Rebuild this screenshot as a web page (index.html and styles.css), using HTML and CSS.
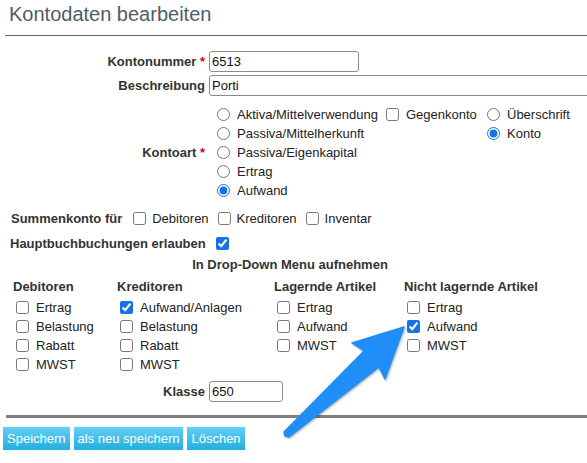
FILE: index.html
```html
<!DOCTYPE html>
<html lang="de">
<head>
    <meta charset="UTF-8">
    <meta name="viewport" content="width=device-width, initial-scale=1.0">
    <title>Kontodaten bearbeiten</title>
    <link rel="stylesheet" href="styles.css">
</head>
<body>
    <h1 class="page-title">Kontodaten bearbeiten</h1>

    <form class="account-form">
        <div class="field-grid">
            <label class="field-label" for="accno">Kontonummer <span class="req">*</span></label>
            <div><input type="text" id="accno" class="text-input input-short" value="6513"></div>

            <label class="field-label" for="description">Beschreibung</label>
            <div><input type="text" id="description" class="text-input input-wide" value="Porti"></div>

            <div class="field-label type-label">Kontoart <span class="req">*</span></div>
            <div class="type-group">
                <div class="type-col col-main">
                    <label class="opt"><input type="radio" name="category"> Aktiva/Mittelverwendung</label>
                    <label class="opt"><input type="radio" name="category"> Passiva/Mittelherkunft</label>
                    <label class="opt"><input type="radio" name="category"> Passiva/Eigenkapital</label>
                    <label class="opt"><input type="radio" name="category"> Ertrag</label>
                    <label class="opt"><input type="radio" name="category" checked> Aufwand</label>
                </div>
                <div class="type-col col-contra">
                    <label class="opt"><input type="checkbox"> Gegenkonto</label>
                </div>
                <div class="type-col">
                    <label class="opt"><input type="radio" name="charttype"> Überschrift</label>
                    <label class="opt"><input type="radio" name="charttype" checked> Konto</label>
                </div>
            </div>
        </div>

        <div class="check-row summary-row">
            <span class="row-label">Summenkonto für</span>
            <label class="opt inline"><input type="checkbox"> Debitoren</label>
            <label class="opt inline"><input type="checkbox"> Kreditoren</label>
            <label class="opt inline"><input type="checkbox"> Inventar</label>
        </div>

        <div class="check-row ledger-row">
            <span class="row-label">Hauptbuchbuchungen erlauben</span>
            <label class="opt inline"><input type="checkbox" checked></label>
        </div>

        <div class="dropdown">
            <div class="dropdown-title">In Drop-Down Menu aufnehmen</div>
            <div class="dropdown-col">
                <div class="dropdown-head">Debitoren</div>
                <label class="opt"><input type="checkbox"> Ertrag</label>
                <label class="opt"><input type="checkbox"> Belastung</label>
                <label class="opt"><input type="checkbox"> Rabatt</label>
                <label class="opt"><input type="checkbox"> MWST</label>
            </div>
            <div class="dropdown-col">
                <div class="dropdown-head">Kreditoren</div>
                <label class="opt"><input type="checkbox" checked> Aufwand/Anlagen</label>
                <label class="opt"><input type="checkbox"> Belastung</label>
                <label class="opt"><input type="checkbox"> Rabatt</label>
                <label class="opt"><input type="checkbox"> MWST</label>
            </div>
            <div class="dropdown-col">
                <div class="dropdown-head">Lagernde Artikel</div>
                <label class="opt"><input type="checkbox"> Ertrag</label>
                <label class="opt"><input type="checkbox"> Aufwand</label>
                <label class="opt"><input type="checkbox"> MWST</label>
            </div>
            <div class="dropdown-col">
                <div class="dropdown-head">Nicht lagernde Artikel</div>
                <label class="opt"><input type="checkbox"> Ertrag</label>
                <label class="opt"><input type="checkbox" checked> Aufwand</label>
                <label class="opt"><input type="checkbox"> MWST</label>
            </div>
        </div>

        <div class="field-grid class-grid">
            <label class="field-label" for="gifi">Klasse</label>
            <div><input type="text" id="gifi" class="text-input input-tiny" value="650"></div>
        </div>

        <hr class="divider">

        <div class="actions">
            <button type="button" class="action-button">Speichern</button>
            <button type="button" class="action-button">als neu speichern</button>
            <button type="button" class="action-button">Löschen</button>
        </div>
    </form>

    <!-- annotation arrow pointing at "Nicht lagernde Artikel / Aufwand" -->
    <svg class="annotation" width="587" height="463" viewBox="0 0 587 463">
        <polygon points="404,327 352,343 364,351 284,432 285,436 289,437 379,367 385,379" fill="#1f8ff7" stroke="#1f8ff7" stroke-width="1.5" stroke-linejoin="round"/>
    </svg>
</body>
</html>
```

FILE: styles.css
```css
body {
    margin: 0;
    font-family: 'Liberation Sans', Arial, sans-serif;
    font-size: 13px;
    color: #222222;
    background-color: #ffffff;
    overflow-x: hidden;
    accent-color: #1473e6;
}
.page-title {
    margin: 0 0 0 5px;
    padding: 2px 0 9px 4px;
    font-size: 20px;
    font-weight: normal;
    line-height: 24px;
    color: #4e5d68;
    border-bottom: 1px solid #5e6d78;
}
.field-grid {
    display: grid;
    grid-template-columns: 200px 400px;
    column-gap: 4px;
    row-gap: 3px;
    margin: 15px 0 0 5px;
}
.field-label {
    align-self: center;
    text-align: right;
    font-weight: bold;
    color: #333333;
}
.req {
    color: #e00000;
}
.text-input {
    display: block;
    box-sizing: border-box;
    height: 21px;
    padding: 0 2px;
    border: 1px solid #8c8c8c;
    border-radius: 3px;
    font-family: inherit;
    font-size: 13px;
    color: #111111;
}
.input-short {
    width: 150px;
}
.input-wide {
    width: 400px;
}
.input-tiny {
    width: 74px;
}
.type-group {
    display: flex;
    margin-top: 6px;
    padding-left: 4px;
}
.type-label {
    margin-top: 6px;
}
.col-main {
    width: 169px;
}
.col-contra {
    width: 101px;
}
.opt {
    display: flex;
    align-items: center;
    height: 19px;
    white-space: nowrap;
}
.opt input {
    width: 13px;
    height: 13px;
    margin: 0 7px 0 4px;
}
.check-row {
    display: flex;
    align-items: center;
    height: 19px;
}
.row-label {
    font-weight: bold;
    color: #333333;
}
.summary-row {
    margin: 9px 0 0 11px;
}
.summary-row .opt {
    margin-left: 9px;
}
.summary-row .opt:first-of-type {
    margin-left: 11px;
}
.summary-row .opt input {
    margin: 0 6px 0 0;
}
.ledger-row {
    margin: 6px 0 0 10px;
}
.ledger-row .opt input {
    margin: 0 0 0 10px;
}
.dropdown {
    display: grid;
    grid-template-columns: 104px 157px 130px 163px;
    row-gap: 7px;
    margin: 4px 0 0 13px;
    width: 554px;
}
.dropdown-title {
    grid-column: 1 / -1;
    text-align: center;
    font-weight: bold;
    color: #333333;
    line-height: 15px;
}
.dropdown-head {
    font-weight: bold;
    color: #333333;
    line-height: 15px;
    margin-bottom: 4px;
}
.dropdown-col .opt input {
    margin: 0 7px 0 3px;
}
.class-grid {
    margin-top: 7px;
}
.divider {
    height: 3px;
    margin: 13px 0 0 6px;
    border: none;
    background-color: #808080;
}
.actions {
    display: flex;
    gap: 4px;
    margin: 9px 0 0 3px;
}
.action-button {
    height: 23px;
    padding: 0 4px;
    border: none;
    border-radius: 0;
    background: linear-gradient(#62cff6, #22afdd);
    color: #ffffff;
    font-family: inherit;
    font-size: 13px;
    cursor: pointer;
}
.annotation {
    position: absolute;
    top: 0;
    left: 0;
    pointer-events: none;
    filter: drop-shadow(1px 1px 1px rgba(0, 0, 0, 0.3));
}
```
